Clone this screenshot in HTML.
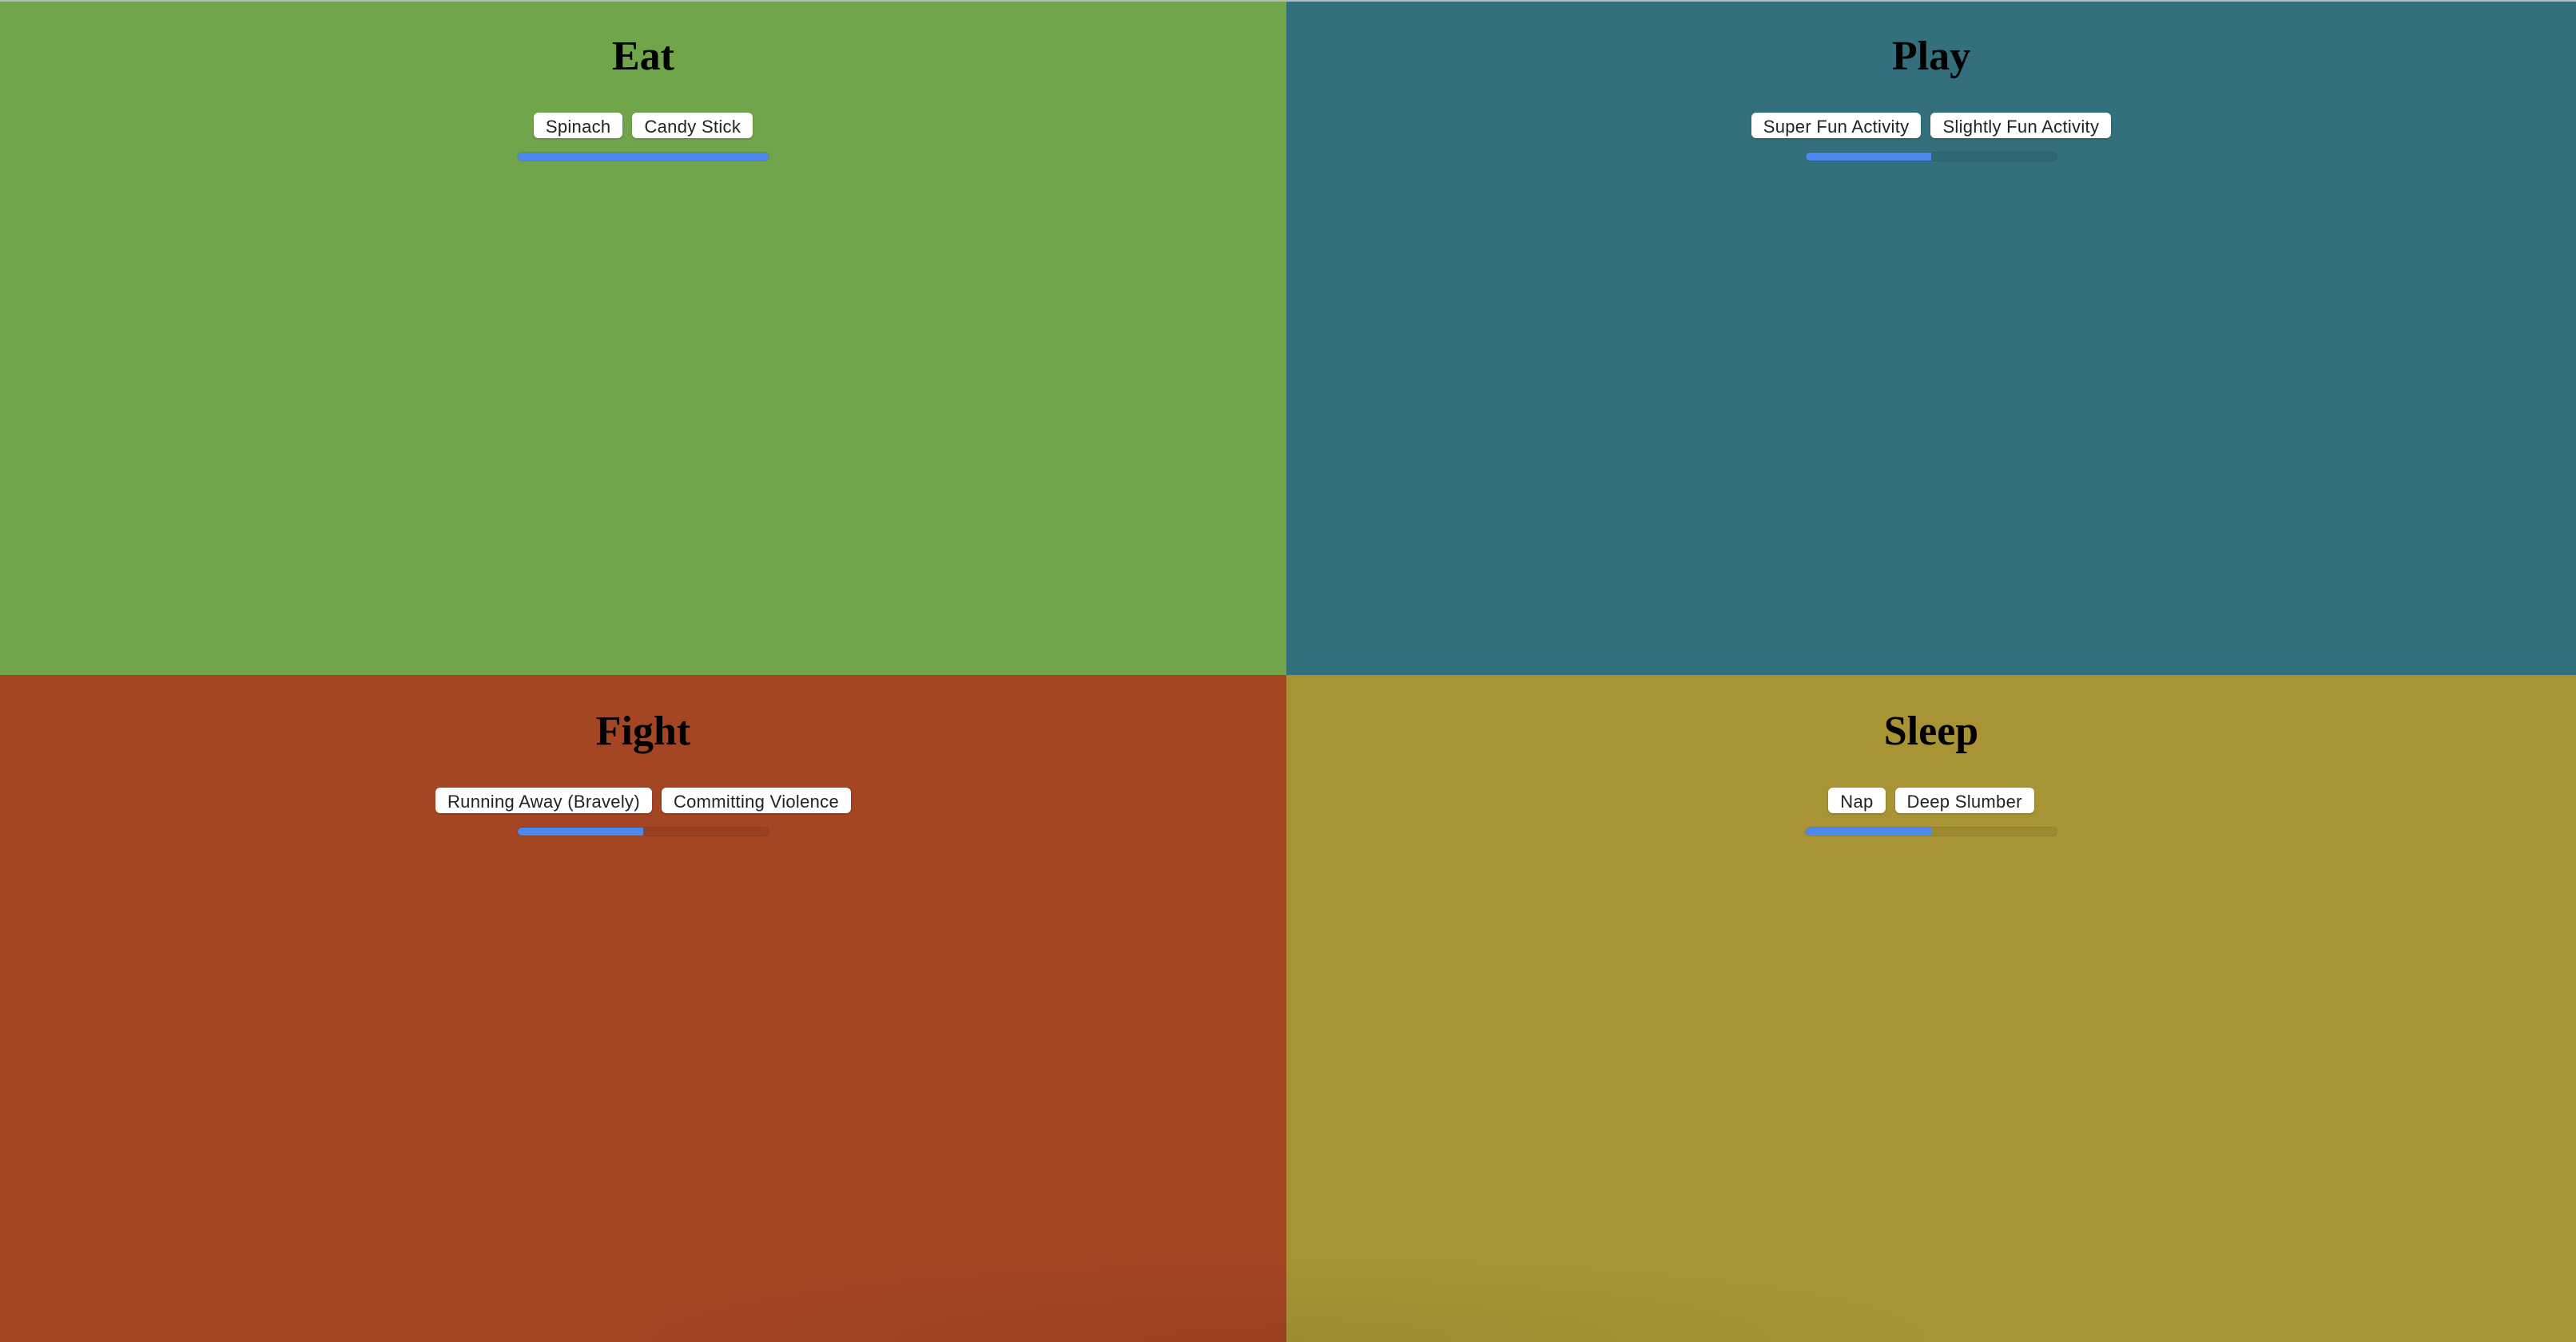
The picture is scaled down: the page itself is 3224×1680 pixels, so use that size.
<!DOCTYPE html>
<html><head><meta charset="utf-8"><style>
*{margin:0;padding:0;box-sizing:border-box}
html,body{width:3224px;height:1680px;overflow:hidden;background:#70a54c;position:relative}
.p{position:absolute;overflow:hidden}
.t{position:absolute;left:0;right:0;top:36px;text-align:center;font:bold 52px/70px "Liberation Serif",serif;color:#000}
.b{position:absolute;left:0;right:0;top:141px;display:flex;justify-content:center;gap:12px}
.b span{display:flex;align-items:center;height:32px;padding:3px 15px 0;background:#fff;border-radius:6px;font:22px/22px "Liberation Sans",sans-serif;letter-spacing:0.3px;color:#222;box-shadow:0 1px 2px rgba(0,0,0,.25)}
.bar{position:absolute;left:50%;margin-left:-158px;top:190px;width:316px;height:12px;border-radius:6px;background:rgba(0,0,0,.07);border:1px solid rgba(0,0,0,.06);overflow:hidden}
.bar i{display:block;height:100%;background:#4c88ee}
.sh{position:absolute;top:715px;height:120px;background:radial-gradient(ellipse 50% 100% at 50% 100%,rgba(0,0,0,.06),rgba(0,0,0,0) 90%)}
</style></head><body>
<div style="position:absolute;left:0;top:0;width:3224px;height:2px;background:#b8b8b8;z-index:5"></div>
<div class="p" style="left:0;top:0;width:1610px;height:845px;background:#70a54c">
<div class="t">Eat</div>
<div class="b"><span>Spinach</span><span>Candy Stick</span></div>
<div class="bar"><i style="width:100%"></i></div></div>
<div class="p" style="left:1610px;top:0;width:1614px;height:845px;background:#346f7e">
<div class="t">Play</div>
<div class="b"><span>Super Fun Activity</span><span>Slightly Fun Activity</span></div>
<div class="bar"><i style="width:50%"></i></div></div>
<div class="p" style="left:0;top:845px;width:1610px;height:835px;background:#a44524">
<div class="t">Fight</div>
<div class="b"><span>Running Away (Bravely)</span><span>Committing Violence</span></div>
<div class="bar"><i style="width:50%"></i></div>
<div class="sh" style="left:650px;width:960px;background:radial-gradient(ellipse 100% 100% at 100% 100%,rgba(0,0,0,.06),rgba(0,0,0,0) 90%)"></div></div>
<div class="p" style="left:1610px;top:845px;width:1614px;height:835px;background:#a89434">
<div class="t">Sleep</div>
<div class="b"><span>Nap</span><span>Deep Slumber</span></div>
<div class="bar"><i style="width:50%"></i></div>
<div class="sh" style="left:0;width:940px;background:radial-gradient(ellipse 100% 100% at 0% 100%,rgba(0,0,0,.06),rgba(0,0,0,0) 90%)"></div></div>
</body></html>
